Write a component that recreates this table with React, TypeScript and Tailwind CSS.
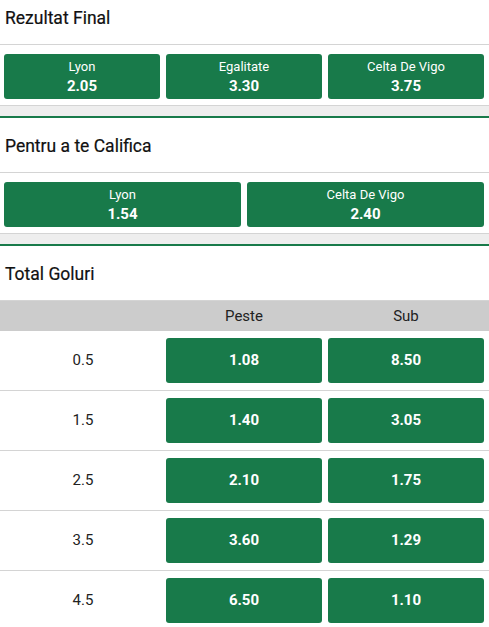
import React from "react";

const GREEN = "bg-[#187a4a]";

function Title({ text, first }: { text: string; first?: boolean }) {
  return (
    <div
      className={`flex items-center px-[5px] border-b border-[#d4d4d4] ${
        first ? "h-[45px] pb-[8px]" : "h-[55px] pt-[2px]"
      }`}
    >
      <span className="text-[17.5px] font-normal text-[#111] [-webkit-text-stroke:0.2px_#111]">{text}</span>
    </div>
  );
}

function Sep() {
  return <div className="h-[13px] bg-[#eeeeee] border-t border-[#d4d4d4] border-b-2 border-b-[#187a4a]" />;
}

function OddBtn({ name, odd }: { name: string; odd: string }) {
  return (
    <div className={`flex-1 h-[45px] rounded-[3px] ${GREEN} flex flex-col items-center justify-center text-white leading-none`}>
      <span className="text-[13px] mb-[6px]">{name}</span>
      <span className="text-[15px] font-bold">{odd}</span>
    </div>
  );
}

function Row({ label, a, b }: { label: string; a: string; b: string }) {
  return (
    <div className="flex items-center h-[60px] border-b border-[#d4d4d4] pr-[5px]">
      <div className="w-[166px] text-center text-[15px] text-[#222]">{label}</div>
      <div className="flex-1 flex gap-[6px]">
        <div className={`flex-1 h-[45px] rounded-[3px] ${GREEN} flex items-center justify-center text-white text-[15px] font-bold`}>{a}</div>
        <div className={`flex-1 h-[45px] rounded-[3px] ${GREEN} flex items-center justify-center text-white text-[15px] font-bold`}>{b}</div>
      </div>
    </div>
  );
}

export default function App() {
  return (
    <div className="w-[489px] h-[627px] overflow-hidden bg-white" style={{ fontFamily: "Roboto, 'Liberation Sans', sans-serif" }}>
      <Title text="Rezultat Final" first />
      <div className="flex gap-[6px] pl-[4px] pr-[5px] pt-[9px] pb-[6px]">
        <OddBtn name="Lyon" odd="2.05" />
        <OddBtn name="Egalitate" odd="3.30" />
        <OddBtn name="Celta De Vigo" odd="3.75" />
      </div>
      <Sep />
      <Title text="Pentru a te Califica" />
      <div className="flex gap-[6px] pl-[4px] pr-[5px] pt-[9px] pb-[6px]">
        <OddBtn name="Lyon" odd="1.54" />
        <OddBtn name="Celta De Vigo" odd="2.40" />
      </div>
      <Sep />
      <Title text="Total Goluri" />
      <div className="flex items-center h-[30px] bg-[#cccccc] pr-[5px] text-[15px] text-[#222]">
        <div className="w-[166px]" />
        <div className="flex-1 flex gap-[6px]">
          <div className="flex-1 text-center">Peste</div>
          <div className="flex-1 text-center">Sub</div>
        </div>
      </div>
      <Row label="0.5" a="1.08" b="8.50" />
      <Row label="1.5" a="1.40" b="3.05" />
      <Row label="2.5" a="2.10" b="1.75" />
      <Row label="3.5" a="3.60" b="1.29" />
      <Row label="4.5" a="6.50" b="1.10" />
    </div>
  );
}
